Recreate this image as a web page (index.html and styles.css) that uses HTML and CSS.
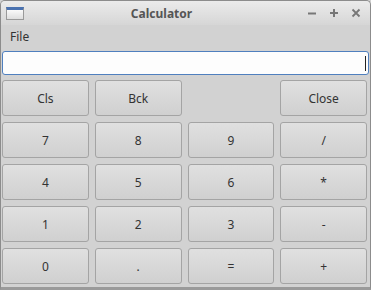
FILE: index.html
```html
<!DOCTYPE html>
<html>
  <head>
    <link rel="stylesheet" href="styles.css">
  </head>
  <body>
    <div class="window">
      <div class="titlebar">
        <span class="win-icon"></span>
        <span class="title">Calculator</span>
        <div class="controls">
          <svg width="10" height="10" viewBox="0 0 10 10"><path d="M1 5.5h8" stroke="#777" stroke-width="2"/></svg>
          <svg width="10" height="10" viewBox="0 0 10 10"><path d="M1 5h8M5 1v8" stroke="#777" stroke-width="2"/></svg>
          <svg width="10" height="10" viewBox="0 0 10 10"><path d="M1.5 1.5l7 7M8.5 1.5l-7 7" stroke="#777" stroke-width="1.8"/></svg>
        </div>
      </div>
      <div class="menubar"><span>File</span></div>
      <div class="display"><span class="caret"></span></div>
      <div class="keys">
        <button>Cls</button>
        <button>Bck</button>
        <span></span>
        <button>Close</button>
        <button>7</button>
        <button>8</button>
        <button>9</button>
        <button>/</button>
        <button>4</button>
        <button>5</button>
        <button>6</button>
        <button>*</button>
        <button>1</button>
        <button>2</button>
        <button>3</button>
        <button>-</button>
        <button>0</button>
        <button>.</button>
        <button>=</button>
        <button>+</button>
      </div>
    </div>
  </body>
</html>
```

FILE: styles.css
```css
* {
  box-sizing: border-box;
  font-family: "Noto Sans", "Open Sans", sans-serif;
}

body {
  margin: 0;
  background: #d2d2d2;
}

.window {
  width: 371px;
  height: 290px;
  border: 1px solid #8c8c8c;
  border-bottom: 3px solid #9a9a9a;
  border-radius: 5px 5px 0 0;
  background: #d2d2d2;
  display: flex;
  flex-direction: column;
}

.titlebar {
  height: 24px;
  display: flex;
  align-items: center;
  position: relative;
  background: linear-gradient(#ebebeb, #d6d6d6);
  border-radius: 4px 4px 0 0;
}

.win-icon {
  width: 18px;
  height: 13px;
  margin-left: 5px;
  border: 1px solid #9a9a9a;
  border-top: 3px solid #4a72b0;
  background: linear-gradient(#fafafa, #dedede);
}

.title {
  flex: 1;
  text-align: center;
  font-size: 12px;
  font-weight: bold;
  color: #555;
  margin-left: -8px;
}

.controls {
  display: flex;
  gap: 12px;
  margin-right: 9px;
}

.menubar {
  height: 23px;
  padding: 3px 0 0 9px;
  font-size: 12px;
  color: #333;
}

.display {
  margin: 3px 1px 0 1px;
  height: 24px;
  border: 1px solid #4f7fbe;
  border-radius: 3px;
  background: #fdfdfd;
  display: flex;
  justify-content: flex-end;
  align-items: center;
  padding-right: 2px;
}

.caret {
  width: 1px;
  height: 15px;
  background: #222;
}

.keys {
  display: grid;
  grid-template-columns: repeat(4, 1fr);
  grid-template-rows: repeat(5, 36px);
  gap: 6px;
  padding: 5px 3px 0 1px;
}

.keys button {
  border: 1px solid #a4a4a4;
  border-radius: 3px;
  background: linear-gradient(#e0e0e0, #d0d0d0);
  font-size: 12px;
  color: #333;
  padding: 0;
}
```
